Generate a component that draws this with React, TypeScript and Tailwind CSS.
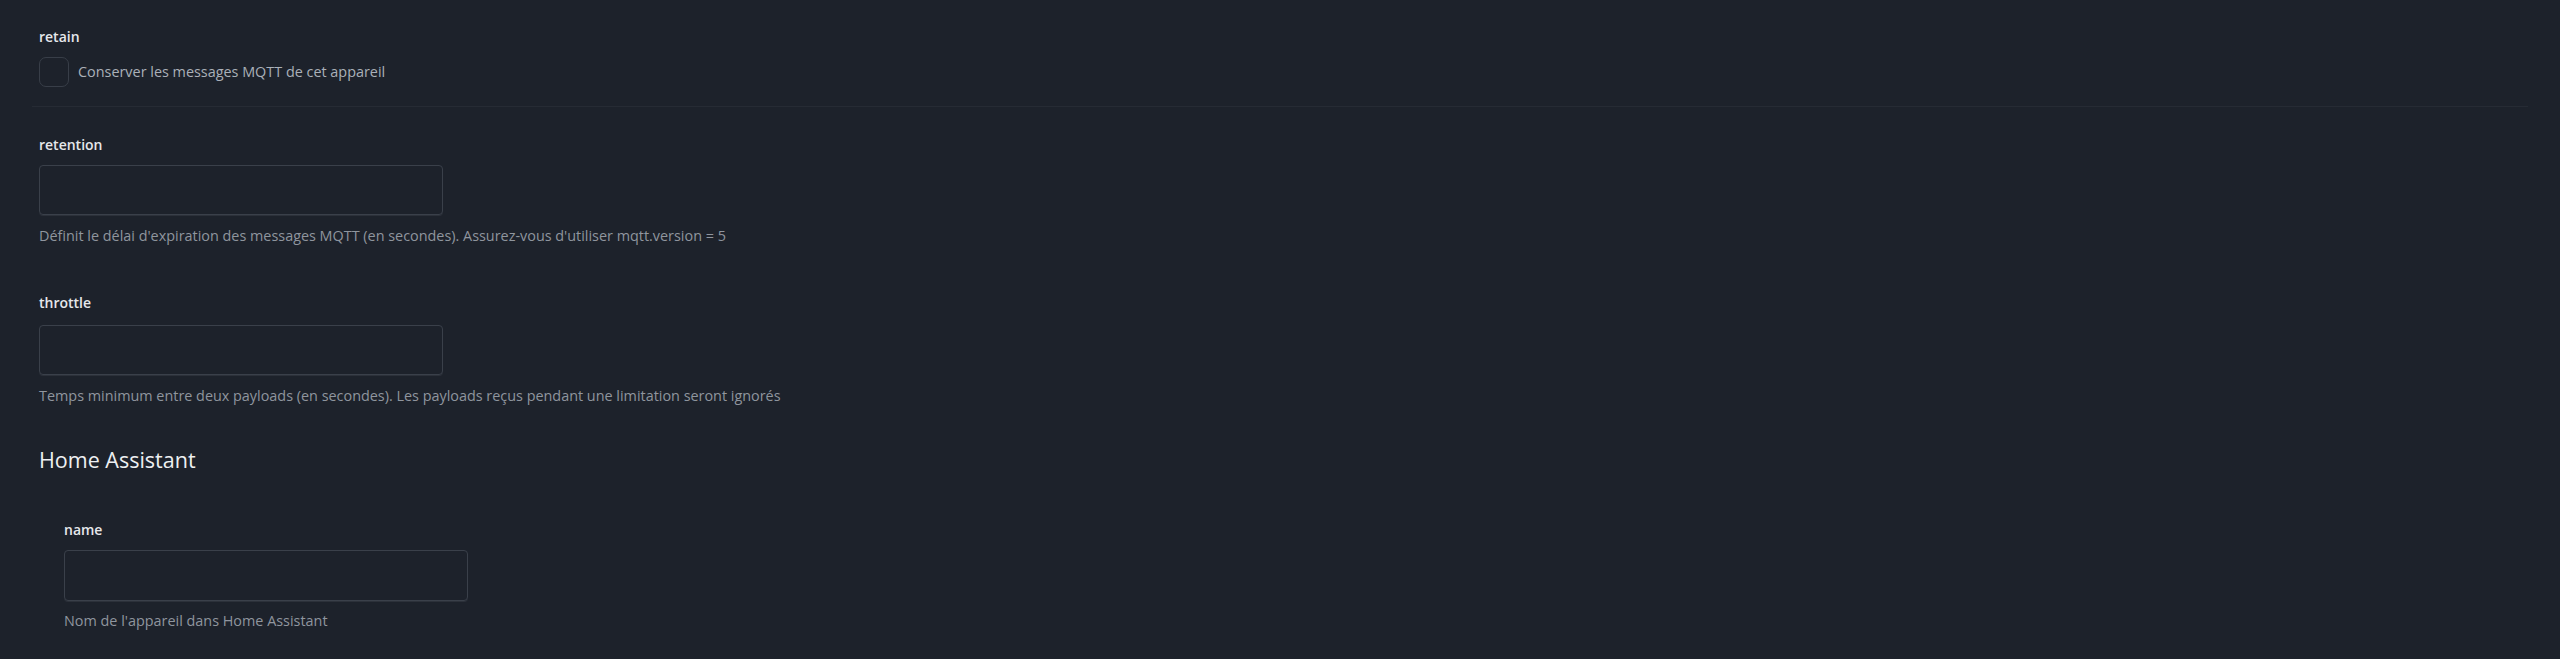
export default function App() {
  const font = { fontFamily: '"Open Sans", "Noto Sans", sans-serif' };
  return (
    <div className="min-h-screen w-full bg-[#1d222b] px-[32px] pt-[27px]" style={font}>
      <div className="px-[7px]">
        <label className="block text-[14px] leading-5 font-semibold text-[#e6e8eb]">retain</label>
        <div className="mt-[10px] flex items-center gap-[9px]">
          <div className="h-[30px] w-[30px] rounded-[7px] border border-[#383e48]" />
          <span className="text-[14.4px] leading-5 text-[#aab0b8]">Conserver les messages MQTT de cet appareil</span>
        </div>
      </div>

      <div className="mt-[19px] h-px bg-[#262b34]" />

      <div className="mt-[28px] px-[7px]">
        <label className="block text-[14px] leading-5 font-semibold text-[#e6e8eb]">retention</label>
        <input className="mt-[10px] block h-[50px] w-[404px] rounded-[4px] border border-[#3a404a] bg-transparent shadow-[0_1px_0_#2c313a]" />
        <p className="mt-[11px] text-[14.4px] leading-5 text-[#8f959e]">
          Définit le délai d'expiration des messages MQTT (en secondes). Assurez-vous d'utiliser mqtt.version = 5
        </p>
      </div>

      <div className="mt-[47px] px-[7px]">
        <label className="block text-[14px] leading-5 font-semibold text-[#e6e8eb]">throttle</label>
        <input className="mt-[12px] block h-[50px] w-[404px] rounded-[4px] border border-[#3a404a] bg-transparent shadow-[0_1px_0_#2c313a]" />
        <p className="mt-[11px] text-[14.4px] leading-5 text-[#8f959e]">
          Temps minimum entre deux payloads (en secondes). Les payloads reçus pendant une limitation seront ignorés
        </p>
      </div>

      <div className="mt-[39px] px-[7px]">
        <h2 className="text-[21.5px] leading-[30px] text-[#eef0f2]">Home Assistant</h2>
        <div className="mt-[45px] pl-[25px]">
          <label className="block text-[14px] leading-5 font-semibold text-[#e6e8eb]">name</label>
          <input className="mt-[10px] block h-[51px] w-[404px] rounded-[4px] border border-[#3a404a] bg-transparent shadow-[0_1px_0_#2c313a]" />
          <p className="mt-[10px] text-[14.4px] leading-5 text-[#8f959e]">Nom de l'appareil dans Home Assistant</p>
        </div>
      </div>
    </div>
  );
}
